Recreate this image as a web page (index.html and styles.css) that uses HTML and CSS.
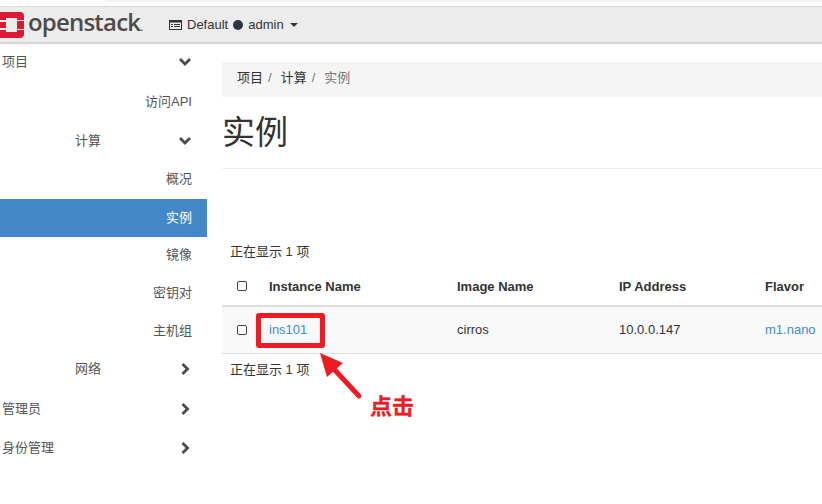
FILE: index.html
```html
<!DOCTYPE html>
<html lang="zh-CN">
<head>
    <meta charset="UTF-8">
    <meta name="viewport" content="width=device-width, initial-scale=1.0">
    <title>实例</title>
    <link rel="stylesheet" href="styles.css">
</head>
<body>

<div class="page">
    <div class="topstrip"></div>
    <header class="navbar">
        <div class="brand">
            <svg class="logo" width="24" height="26" viewBox="0 0 24 26">
                <path fill="#da1a32" d="M-6 0H20a4 4 0 0 1 4 4V8H17V6H6V8H-6ZM0 10H6V16H0ZM17 9H24V17H17ZM-6 18H6V20H17V18H24V22a4 4 0 0 1-4 4H-6Z"/>
            </svg>
            <span class="brand-name">openstack<small>.</small></span>
        </div>
        <div class="context">
            <svg class="ctx-icon" width="13" height="10" viewBox="0 0 13 10">
                <path fill="#333" d="M0 0H13V10H0ZM1 2.500V9H12V2.500Z"/>
                <path fill="#333" d="M2 4H4V5H2ZM5 4H11V5H5ZM2 6H4V7H2ZM5 6H11V7H5Z"/>
            </svg>
            <span>Default</span>
            <i class="dot"></i>
            <span>admin</span>
            <i class="caret"></i>
        </div>
    </header>

    <div class="layout">
        <nav class="sidebar">
            <a class="nav-item top">项目
                <svg class="chev" width="14" height="10" viewBox="0 0 14 10"><path d="M2 2L7 7L12 2"/></svg>
            </a>
            <a class="nav-item leaf first">访问API</a>
            <a class="nav-item group">计算
                <svg class="chev" width="14" height="10" viewBox="0 0 14 10"><path d="M2 2L7 7L12 2"/></svg>
            </a>
            <a class="nav-item leaf tall">概况</a>
            <a class="nav-item leaf active">实例</a>
            <a class="nav-item leaf">镜像</a>
            <a class="nav-item leaf">密钥对</a>
            <a class="nav-item leaf">主机组</a>
            <a class="nav-item group short">网络
                <svg class="chev" width="14" height="14" viewBox="0 0 14 14"><path d="M4.500 2L9.500 7L4.500 12"/></svg>
            </a>
            <a class="nav-item top short-plain">管理员
                <svg class="chev" width="14" height="14" viewBox="0 0 14 14"><path d="M4.500 2L9.500 7L4.500 12"/></svg>
            </a>
            <a class="nav-item top">身份管理
                <svg class="chev" width="14" height="14" viewBox="0 0 14 14"><path d="M4.500 2L9.500 7L4.500 12"/></svg>
            </a>
        </nav>

        <main class="content">
            <ol class="breadcrumb">
                <li>项目</li>
                <li>计算</li>
                <li class="current">实例</li>
            </ol>
            <h1 class="page-title">实例</h1>
            <p class="count first-count">正在显示 1 项</p>
            <table class="table">
                <thead>
                    <tr>
                        <th class="col-check"><i class="check"></i></th>
                        <th class="col-name">Instance Name</th>
                        <th class="col-image">Image Name</th>
                        <th class="col-ip">IP Address</th>
                        <th>Flavor</th>
                    </tr>
                </thead>
                <tbody>
                    <tr>
                        <td class="col-check"><i class="check"></i></td>
                        <td class="col-name"><a href="#">ins101</a></td>
                        <td class="col-image">cirros</td>
                        <td class="col-ip">10.0.0.147</td>
                        <td><a href="#">m1.nano</a></td>
                    </tr>
                </tbody>
            </table>
            <p class="count">正在显示 1 项</p>
        </main>
    </div>

    <!-- red annotation drawn over the screenshot -->
    <div class="mark-box"></div>
    <svg class="mark-arrow" width="50" height="52" viewBox="0 0 50 52">
        <path fill="none" stroke="#ed1c24" stroke-width="5" stroke-linecap="round" d="M41 45L14 16"/>
        <path fill="#ed1c24" d="M2 2L25 12L9 26Z"/>
    </svg>
    <span class="mark-label">点击</span>
</div>

</body>
</html>
```

FILE: styles.css
```css
/* OpenStack instances page */

* {
    box-sizing: border-box;
}
body {
    margin: 0;
    background-color: #fff;
    font-family: "Liberation Sans", "Noto Sans CJK SC", sans-serif;
    font-size: 13px;
    color: #333;
}
.page {
    position: relative;
    width: 822px;
    height: 504px;
    overflow: hidden;
}
.topstrip {
    height: 2px;
    margin-left: 105px;
    background-color: #f3f3f3;
}
.navbar {
    display: flex;
    align-items: center;
    height: 38px;
    margin-top: 4px;
    background-color: #ececec;
    border-top: 1px solid #d8d8d8;
    border-bottom: 2px solid #d4d4d4;
}
.brand {
    display: flex;
    align-items: center;
    width: 169px;
}
.logo {
    flex: none;
}
.brand-name {
    margin-left: 4px;
    font-family: "Open Sans", sans-serif;
    font-size: 24px;
    font-weight: 600;
    letter-spacing: -0.8px;
    line-height: 30px;
    color: #4e4a49;
}
.brand-name small {
    font-size: 10px;
}
.context {
    display: flex;
    align-items: center;
    gap: 4px;
    font-size: 13px;
}
.ctx-icon {
    margin-right: 1px;
}
.dot {
    width: 10px;
    height: 10px;
    border-radius: 50%;
    background-color: #2b3442;
    margin: 1px 1px 0 1px;
}
.caret {
    border-top: 4px solid #333;
    border-left: 4px solid transparent;
    border-right: 4px solid transparent;
    margin-left: 2px;
}
.layout {
    display: flex;
    margin-top: -3px;
}
.sidebar {
    flex: none;
    width: 207px;
}
.nav-item {
    display: flex;
    align-items: center;
    height: 38px;
    color: #555;
    font-size: 13px;
}
.nav-item.top {
    justify-content: space-between;
    height: 39px;
    padding: 0 15px 0 2px;
}
.nav-item.short-plain {
    height: 38px;
    padding-bottom: 2px;
}
.nav-item.group {
    justify-content: space-between;
    height: 39px;
    padding: 0 15px 0 75px;
}
.nav-item.group.short {
    height: 38px;
    padding-bottom: 6px;
}
.nav-item.leaf {
    justify-content: flex-end;
    padding: 0 15px 6px 0;
}
.nav-item.leaf.first {
    height: 40px;
    padding-bottom: 0;
}
.nav-item.leaf.tall {
    height: 40px;
    padding-bottom: 4px;
}
.nav-item.leaf.active {
    padding-bottom: 4px;
    background-color: #4288c9;
    color: #fff;
}
.chev {
    flex: none;
    margin-top: 2px;
}
.short .chev,
.short-plain .chev {
    margin-top: 4px;
}
.chev path {
    fill: none;
    stroke: #4a4a4a;
    stroke-width: 2.8;
}
.content {
    flex: 1;
    min-width: 0;
    padding: 21px 0 0 15px;
}
.breadcrumb {
    display: flex;
    align-items: center;
    list-style: none;
    margin: 0;
    height: 35px;
    padding: 0 0 7px 15px;
    background-color: #f5f5f5;
}
.breadcrumb li + li::before {
    content: "/";
    padding: 0 9px 0 5px;
    color: #777;
}
.breadcrumb .current {
    color: #777;
}
.page-title {
    margin: 0;
    padding: 15px 0 15px;
    height: 72px;
    font-size: 33px;
    line-height: 42px;
    font-weight: 400;
    border-bottom: 1px solid #eee;
}
.count {
    margin: 0;
    padding-left: 8px;
    line-height: 20px;
}
.first-count {
    margin-top: 73px;
}
.table {
    width: 100%;
    border-collapse: collapse;
    margin-top: 5px;
    table-layout: fixed;
}
.table th {
    height: 39px;
    text-align: left;
    font-weight: 700;
    padding: 0;
    border-bottom: 2px solid #ddd;
}
.table td {
    height: 47px;
    padding: 0;
    background-color: #f9f9f9;
    border-bottom: 1px solid #ddd;
}
.table a {
    color: #428bca;
    text-decoration: none;
}
.col-check {
    width: 47px;
    padding-left: 15px !important;
}
.col-name {
    width: 188px;
}
.col-image {
    width: 162px;
}
.col-ip {
    width: 146px;
}
.check {
    display: block;
    width: 10px;
    height: 10px;
    border: 1px solid #444;
    border-radius: 2px;
    background-color: #fff;
}
.table + .count {
    margin-top: 6px;
}
.mark-box {
    position: absolute;
    left: 256px;
    top: 313px;
    width: 69px;
    height: 35px;
    border: 5px solid #ed1c24;
    border-radius: 3px;
}
.mark-arrow {
    position: absolute;
    left: 318px;
    top: 351px;
}
.mark-label {
    position: absolute;
    left: 370px;
    top: 394px;
    font-size: 22px;
    line-height: 26px;
    font-weight: 700;
    color: #ed1c24;
    -webkit-text-stroke: 0.3px #ed1c24;
}
```
